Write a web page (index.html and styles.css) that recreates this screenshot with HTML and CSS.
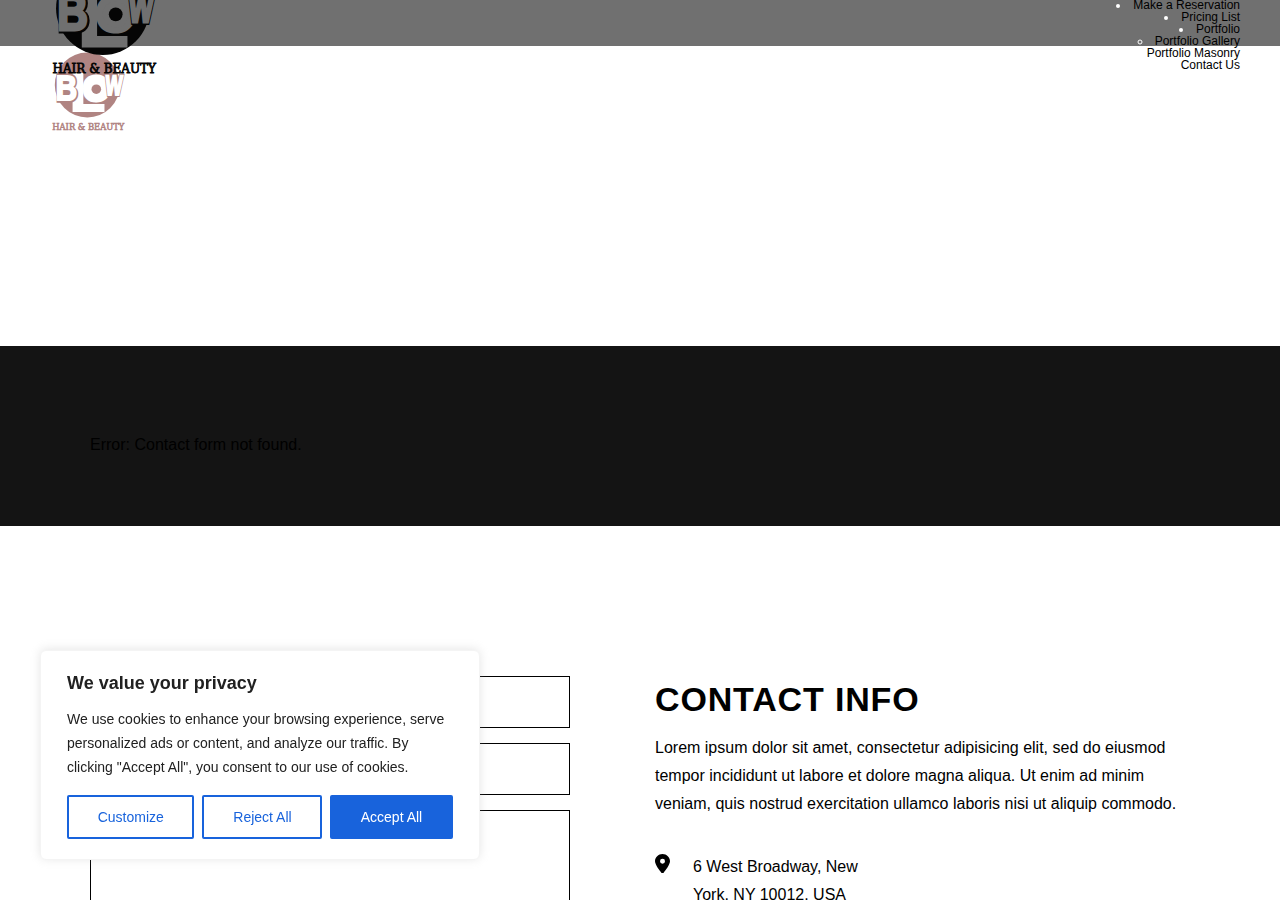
FILE: index.html
```html
<!DOCTYPE html>
<html lang="en">
<head>
<meta charset="utf-8">
<title>Contact Us</title>
<link rel="stylesheet" href="styles.css">
</head>
<body>
<header class="header">
  <div class="brand">
    <svg class="logo logo-dark" viewBox="0 0 73 80">
      <circle class="disc" cx="35.300" cy="35" r="32.500"/>
      <text class="face heavy" transform="translate(18 61) scale(1.080 1)" font-size="53">L</text>
      <text class="edge" transform="translate(4 51) scale(.830 1)" font-size="37">B</text>
      <text class="face heavy" transform="translate(3.700 50.300) scale(.820 1)" font-size="36">B</text>
      <text class="face round" x="44.300" y="50.200" font-size="32.500" text-anchor="middle">O</text>
      <circle class="face" cx="44.300" cy="39.200" r="9"/>
      <circle class="disc" cx="44.300" cy="39.200" r="4.800"/>
      <text class="edge fine" transform="translate(53 44.700) skewX(-3) scale(.640 1)" font-size="28">W</text>
      <text class="face heavy" transform="translate(53 44.700) skewX(-3) scale(.640 1)" font-size="28">W</text>
      <text class="caption" x="0.300" y="79.800" textLength="72" lengthAdjust="spacingAndGlyphs">HAIR &amp; BEAUTY</text>
    </svg>
    <svg class="logo logo-rose" viewBox="0 0 73 80">
      <circle class="disc" cx="35.300" cy="35" r="32.500"/>
      <text class="face heavy" transform="translate(18 61) scale(1.080 1)" font-size="53">L</text>
      <text class="edge" transform="translate(4 51) scale(.830 1)" font-size="37">B</text>
      <text class="face heavy" transform="translate(3.700 50.300) scale(.820 1)" font-size="36">B</text>
      <text class="face round" x="44.300" y="50.200" font-size="32.500" text-anchor="middle">O</text>
      <circle class="face" cx="44.300" cy="39.200" r="9"/>
      <circle class="disc" cx="44.300" cy="39.200" r="4.800"/>
      <text class="edge fine" transform="translate(53 44.700) skewX(-3) scale(.640 1)" font-size="28">W</text>
      <text class="face heavy" transform="translate(53 44.700) skewX(-3) scale(.640 1)" font-size="28">W</text>
      <text class="caption" x="0.300" y="79.800" textLength="72" lengthAdjust="spacingAndGlyphs">HAIR &amp; BEAUTY</text>
    </svg>
  </div>
  <ul class="menu">
    <li>Make a Reservation</li>
    <li>Pricing List</li>
    <li>Portfolio
      <ul class="submenu"><li>Portfolio Gallery</li><li class="plain">Portfolio Masonry</li></ul>
    </li>
    <li class="plain">Contact Us</li>
  </ul>
</header>
<section class="banner"><p>Error: Contact form not found.</p></section>
<main class="contact">
  <form class="form">
    <input class="field" type="text" aria-label="Name">
    <input class="field" type="text" aria-label="Email">
    <textarea class="field message" aria-label="Message"></textarea>
  </form>
  <section class="info">
    <h2>CONTACT INFO</h2>
    <p>Lorem ipsum dolor sit amet, consectetur adipisicing elit, sed do eiusmod tempor incididunt ut labore et dolore magna aliqua. Ut enim ad minim veniam, quis nostrud exercitation ullamco laboris nisi ut aliquip commodo.</p>
    <div class="address">
      <svg class="pin" viewBox="0 0 384 512" preserveAspectRatio="none"><path d="M215.700 499.200C267 435 384 279.400 384 192 384 86 298 0 192 0S0 86 0 192c0 87.400 117 243 168.300 307.200 12.300 15.300 35.100 15.300 47.400 0zM192 128a64 64 0 1 1 0 128 64 64 0 1 1 0-128z"/></svg>
      <address>6 West Broadway, New<br>York, NY 10012, USA</address>
    </div>
  </section>
</main>
<aside class="consent">
  <h3>We value your privacy</h3>
  <p>We use cookies to enhance your browsing experience, serve personalized ads or content, and analyze our traffic. By clicking "Accept All", you consent to our use of cookies.</p>
  <div class="actions">
    <button class="btn customize">Customize</button>
    <button class="btn reject">Reject All</button>
    <button class="btn accept">Accept All</button>
  </div>
</aside>
</body>
</html>
```

FILE: styles.css
```css
* { box-sizing: border-box; }
html { overflow: hidden; }
body { margin: 0; height: 900px; overflow: hidden; background: #fff; color: #000; font-family: "Liberation Sans", Arial, sans-serif; font-size: 16px; }
.header { height: 46px; margin-bottom: 300px; background: #707070; display: flex; justify-content: space-between; padding: 0 40px 0 52px; }
.brand { position: relative; }
.logo { position: absolute; left: 0; overflow: visible; font-family: "Liberation Sans", Arial, sans-serif; font-weight: bold; }
.logo-dark { z-index: 2; width: 105px; height: 115px; top: -42px; --ink: #050505; --face: #707070; }
.logo-rose { z-index: 1; width: 73px; height: 80px; top: 50px; --ink: #b08482; --face: #fff; }
.disc { fill: var(--ink); }
.edge { fill: var(--ink); stroke: var(--ink); stroke-width: 3.4px; }
.face { fill: var(--face); }
.heavy { stroke: var(--face); stroke-width: 2.2px; }
.fine { stroke-width: 4px; }
.round { stroke: var(--face); stroke-width: 5px; }
.caption { fill: var(--ink); stroke: var(--ink); stroke-width: .55px; font-family: "DejaVu Serif", serif; font-weight: normal; font-size: 8.6px; }
.menu, .submenu { margin: 0; padding: 0; text-align: right; }
.menu { font-size: 12px; line-height: 12px; list-style: disc inside; margin-top: -1px; }
.submenu { list-style: circle inside; }
.menu li::marker { color: #fff; }
.menu .plain { list-style: none; }
.banner { height: 180px; padding: 85px 90px 0; background: #141414; }
.banner p { margin: 0; line-height: 28px; }
.contact { display: grid; grid-template-columns: 480px 535px; column-gap: 85px; height: 374px; overflow: hidden; padding: 150px 90px 0; }
.form { display: flex; flex-direction: column; gap: 15px; }
.field { width: 100%; height: 52px; border: 1px solid #000; border-radius: 0; background: #fff; padding: 0; resize: none; }
.message { height: 90px; border-bottom: 0; }
.info h2 { margin: 3px 0 15px; font-size: 34px; line-height: 40px; letter-spacing: .85px; }
.info p { margin: 0 0 35px; line-height: 28px; }
.address { display: flex; gap: 23px; }
.address address { font-style: normal; line-height: 28px; }
.pin { width: 15px; height: 19.4px; margin-top: .5px; }
.consent { position: fixed; left: 40px; top: 650px; width: 440px; height: 210px; padding: 20px 26px; background: #fff; border: 1px solid #f4f4f4; border-radius: 6px; box-shadow: 0 -1px 10px #acabab4d; color: #212121; }
.consent h3 { margin: 0 0 12px; font-size: 18px; line-height: 24px; }
.consent p { margin: 0 0 16px; font-size: 14px; line-height: 24px; }
.actions { display: flex; gap: 8px; }
.btn { height: 44px; border: 2px solid #1863dc; border-radius: 2px; background: transparent; color: #1863dc; font: 14px "Liberation Sans", Arial, sans-serif; padding: 0 0 0 .6px; }
.customize { width: 127px; }
.reject { width: 120px; padding-left: 1px; }
.accept { width: 123px; padding: 0; background: #1863dc; color: #fff; }
```
